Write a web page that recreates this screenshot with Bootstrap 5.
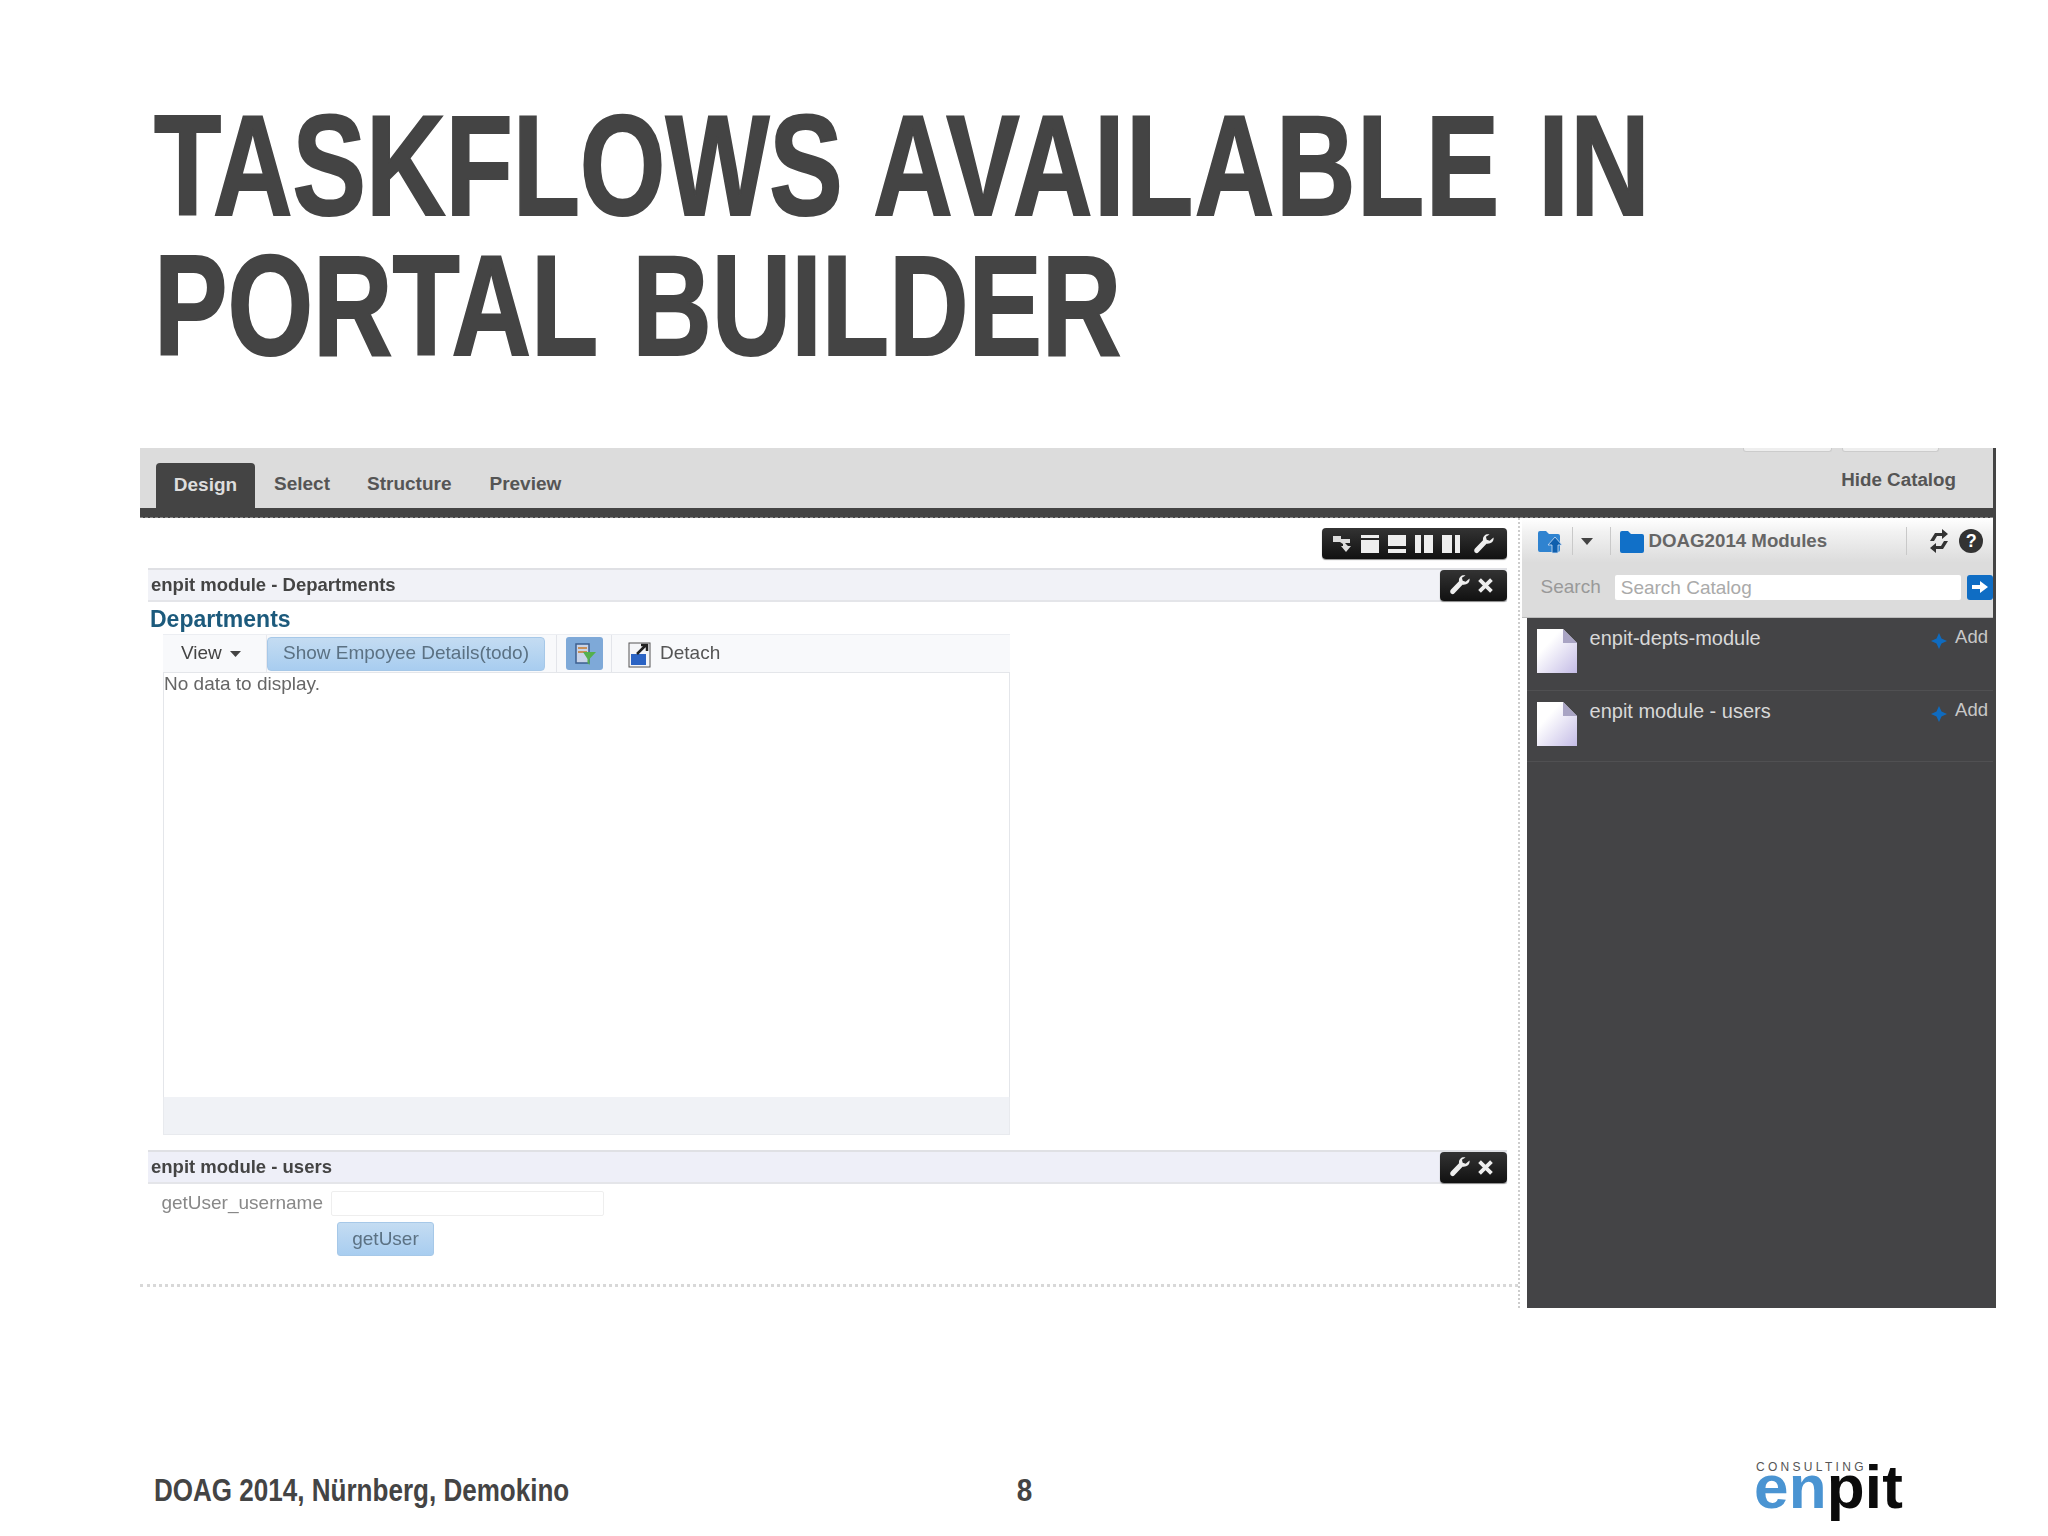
<!DOCTYPE html>
<html lang="en">
<head>
<meta charset="utf-8">
<title>Taskflows</title>
<link href="https://cdn.jsdelivr.net/npm/bootstrap@5.3.0/dist/css/bootstrap.min.css" rel="stylesheet">
<style>
html,body{margin:0;background:#fff}
.slide{width:2048px;height:1536px;overflow:hidden;font-family:"Liberation Sans",Arial,sans-serif;position:relative}
.ttl{margin:0;padding:96px 0 0 154px;height:448px;font-family:"Liberation Sans",sans-serif;font-weight:700;font-size:142px;line-height:140px;color:#444;white-space:nowrap}
.ttl>span{display:inline-block;transform:scaleX(.775);transform-origin:0 50%;-webkit-text-stroke:2px #444}
.tw1{letter-spacing:2px;word-spacing:7px}
.tw2{word-spacing:7px}
.shot{margin-left:140px;width:1856px;height:860px;filter:blur(.7px);border-right:3px solid #444;color:#444;font-size:18px}
.topbar{height:60px;background:#dcdcdc;padding-left:16px;position:relative}
.tabon{width:99px;height:45px;background:#444;color:#ddd;border-radius:4px 4px 0 0;font-weight:700;font-size:19px}
.tabx{font-weight:700;font-size:19px;color:#555;margin-bottom:10px}
.tx1{margin-left:19px}.tx2{margin-left:37px}.tx3{margin-left:38px}
.hidec{margin-left:auto;margin-right:37px;margin-bottom:14px;font-weight:700;font-size:18.800px;color:#555}
.stub{position:absolute;top:0;height:4px;background:#eee;border:1px solid #ccc;border-top:0;border-radius:0 0 3px 3px}
.stub1{left:1603px;width:89px}.stub2{left:1702px;width:97px}
.darkbar{height:10px;background:#444;border-bottom:1px dashed #888}
.lmain{width:1384px;height:790px;border-right:2px dotted #ccc;padding:10px 0 0 8px;position:relative}
.tbar1{margin-right:11px}
.blk{height:31px;background:linear-gradient(#333,#111);border-radius:4px;box-shadow:0 1px 1px #888;padding:0 13px 0 10px}
.blk1{width:185px;gap:9px}.blk2{width:67px}
.wrl{margin-left:5px}
.mhd{height:34px;background:#f1f2f7;border-top:2px solid #dfe0e4;border-bottom:2px solid #e4e5e9;margin:9px 11px 0 0;font-weight:700;font-size:18.500px;color:#444;padding-left:3px}
.mhd2{margin-top:15px;background:#eeeff8}
.depts{height:32px;color:#1c5a7c;font-weight:700;font-size:23px;line-height:35px;padding-left:2px}
.tabbox{width:847px;margin-left:15px}
.tbx{height:38px;background:#f8f9fb;border-top:1px solid #eceef2;font-size:19px;color:#555}
.vw{width:104px;padding-left:18px;border-right:1px solid #e8e9ee;height:100%;color:#444}
.blubtn{background:linear-gradient(#c4dcf2,#a8cdf0);border:1px solid #a6c8e8;border-radius:4px;color:#5b7183;width:278px;height:34px;font-size:19px}
.sep1{width:1px;height:100%;background:#e3e5ea;margin:0 9px 0 11px}
.ibtn{width:37px;height:33px;background:#7ea9d8;border-radius:3px}
.sep2{width:1px;height:100%;background:#e3e5ea;margin:0 8px}
.grd{height:425px;border:1px solid #e4e6ea;border-bottom:0;font-size:19px;color:#666;line-height:22px;background:#fff}
.gft{height:38px;background:#f0f2f6;border:1px solid #e8eaee;border-top:0}
.frm{margin-top:7px;color:#888;font-size:19px;height:25px}
.lbl{width:175px;text-align:right;white-space:nowrap}
.fld{width:273px;height:25px;border:1px solid #eee;border-radius:2px;margin-left:8px;background:#fff}
.gbtn{margin:6px 0 0 189px;width:97px;height:34px;background:linear-gradient(#c4dcf2,#a8cdf0);border:1px solid #a6c8e8;border-radius:3px;color:#5b7183;font-size:19px}
.dots{position:absolute;left:0;right:0;top:766px;border-top:3px dotted #d8d8d8}
.rpane{width:468px;margin-left:7px}
.rhead{height:100px;background:linear-gradient(#fff 0,#f2f2f2 14%,#dcdcdc 45%,#dcdcdc);border-bottom:1px solid #bbb;margin-left:-5px}
.rtool{height:46px;padding:0 0 0 16px;position:relative;font-size:18.700px;font-weight:700;color:#666}
.vsep{width:1px;height:28px;background:#c9c9c9}
.vs1{margin-left:17px}.vs2{margin-left:79px}
.syn{margin-left:22px}
.hlp{width:24px;height:24px;margin-left:10px;background:#333;font-size:18px;line-height:1}
.rsrch{height:46px;padding-left:19px;color:#999;font-size:19px}
.srin{width:346px;height:25px;background:#fff;margin-left:14px;padding-left:6px;line-height:25px;color:#aaa;border-radius:2px}
.gobtn{width:26px;height:25px;margin-left:6px;background:#0f6dc4;border-radius:3px}
.rdark{background:#444446;height:690px;color:#d8d8d8;font-size:20px}
.citem{height:73px;border-bottom:1px solid #505052;padding:11px 5px 0 10px}
.citem:nth-child(2){height:71px}
.cnm{margin-left:13px;line-height:18px}
.cadd{margin-left:auto;color:#c8c8c8;line-height:16px;font-size:18.500px}
.ftr{position:absolute;left:154px;right:0;top:1472px;font-family:"Liberation Sans",sans-serif;font-weight:700;font-size:31px;line-height:38px;color:#444;white-space:nowrap}
.ftx{display:inline-block;transform:scaleX(.84);transform-origin:0 50%}
.pg{position:absolute;left:862px;top:0;width:14px;text-align:center;transform:scaleX(.9)}
.lgo{position:absolute;left:1755px;top:1460px;width:160px;height:64px}
.lcs{position:absolute;left:1px;top:2px;font-size:12px;letter-spacing:3.300px;line-height:11px;color:#555;font-family:"Liberation Sans",sans-serif;white-space:nowrap}
.lnm{position:absolute;left:-1px;top:11.500px;font-family:"Liberation Sans",sans-serif;font-weight:700;font-size:62px;line-height:30px;letter-spacing:.2px;color:#0b0b0b}
.lnm b{color:#4a94d2;font-weight:700}
svg{display:block;flex:none}
</style>
</head>
<body>
<svg width="0" height="0" class="position-absolute">
<defs>
<linearGradient id="pg" x1="0" y1="0" x2="1" y2="1"><stop offset="0.3" stop-color="#fff"/><stop offset="1" stop-color="#c4bce6"/></linearGradient>
<symbol id="wr" viewBox="0 0 20 20"><path d="M19.500 3.500l-3.800 3.300-3-1-.8-3L15.500.500C12-.6 8.500 2 9 6.200L1 14.600c-1.600 1.600-.5 3.500.5 4.200 1 .6 2 .4 2.700-.3l8.300-8.800c4.500.7 7.800-2.500 7-6.200z" fill="#eee"/></symbol>
<symbol id="cl" viewBox="0 0 20 20"><path d="M3 3l14 14M17 3L3 17" stroke="#eee" stroke-width="4.500"/></symbol>
<symbol id="fo" viewBox="0 0 26 26"><path d="M1 5a2 2 0 0 1 2-2h6l3 3h11a2 2 0 0 1 2 2v15a2 2 0 0 1-2 2H3a2 2 0 0 1-2-2z" fill="#1170c8"/></symbol>
<symbol id="dc" viewBox="0 0 40 44"><path d="M0 0h26l14 14v30H0z" fill="url(#pg)"/><path d="M26 0l14 14H26z" fill="#a9a4c4"/></symbol>
<symbol id="pl" viewBox="0 0 16 16"><path d="M8 0l2.500 5.500L16 8l-5.500 2.500L8 16l-2.500-5.500L0 8l5.500-2.500z" fill="#0f6bbf"/></symbol>
</defs>
</svg>
<div class="slide">
<h1 class="ttl"><span>TASKFLOWS <span class="tw1">AVAILABLE IN</span><br><span class="tw2">PORTAL BUILDER</span></span></h1>
<div class="shot d-flex flex-column">
  <div class="topbar d-flex align-items-end">
    <span class="stub stub1"></span><span class="stub stub2"></span>
    <div class="tabon d-flex align-items-center justify-content-center">Design</div>
    <div class="tabx tx1">Select</div>
    <div class="tabx tx2">Structure</div>
    <div class="tabx tx3">Preview</div>
    <div class="hidec">Hide Catalog</div>
  </div>
  <div class="darkbar"></div>
  <div class="d-flex flex-grow-1">
    <div class="lmain">
      <div class="tbar1 d-flex justify-content-end">
        <div class="blk blk1 d-flex align-items-center">
          <svg width="20" height="18" viewBox="0 0 20 18"><path d="M1 1h8v3h9v4h-5l3 3h3l-5 6-5-6h2V9L8 7H1z" fill="#ddd"/></svg>
          <svg width="18" height="18" viewBox="0 0 18 18"><path d="M0 0h18v3H0zM0 5h18v13H0z" fill="#eee"/></svg>
          <svg width="18" height="18" viewBox="0 0 18 18"><path d="M0 0h18v11H0zM0 14h18v4H0z" fill="#eee"/></svg>
          <svg width="18" height="18" viewBox="0 0 18 18"><path d="M0 0h6v18H0zM9 0h9v18H9z" fill="#eee"/></svg>
          <svg width="18" height="18" viewBox="0 0 18 18"><path d="M0 0h10v18H0zM13 0h5v18h-5z" fill="#eee"/></svg>
          <svg width="20" height="20" class="wrl"><use href="#wr"/></svg>
        </div>
      </div>
      <div class="mhd d-flex align-items-center justify-content-between">
        <span>enpit module - Departments</span>
        <div class="blk blk2 d-flex align-items-center justify-content-between"><svg width="20" height="20"><use href="#wr"/></svg><svg width="17" height="17"><use href="#cl"/></svg></div>
      </div>
      <div class="depts">Departments</div>
      <div class="tabbox">
        <div class="tbx d-flex align-items-center">
          <div class="vw d-flex align-items-center gap-1">View <svg width="11" height="6" viewBox="0 0 11 6" class="ms-1"><path d="M0 0h11L5.500 6z" fill="#444"/></svg></div>
          <div class="blubtn d-flex align-items-center justify-content-center">Show Empoyee Details(todo)</div>
          <div class="sep1"></div>
          <div class="ibtn d-flex align-items-center justify-content-center">
            <svg width="24" height="24" viewBox="0 0 24 24"><rect x="3" y="2" width="13" height="19" fill="#c9d4e8" stroke="#3c5f8f" stroke-width="1.500"/><path d="M5 6h9M5 10h9" stroke="#c87a2a" stroke-width="1.500"/><path d="M10 10h13l-6.500 7v6l-2-2v-4z" fill="#54b04c"/></svg>
          </div>
          <div class="sep2"></div>
          <svg width="24" height="28" viewBox="0 0 24 28" class="ms-2"><rect x="1" y="3" width="21" height="24" fill="#f4f5f8" stroke="#555"/><rect x="3" y="14" width="15" height="11" fill="#2a63c4"/><path d="M9 14l9-9m-5 0h6v6" stroke="#222" stroke-width="2.500" fill="none"/></svg>
          <span class="ms-2">Detach</span>
        </div>
        <div class="grd">No data to display.</div>
        <div class="gft"></div>
      </div>
      <div class="mhd mhd2 d-flex align-items-center justify-content-between">
        <span>enpit module - users</span>
        <div class="blk blk2 d-flex align-items-center justify-content-between"><svg width="20" height="20"><use href="#wr"/></svg><svg width="17" height="17"><use href="#cl"/></svg></div>
      </div>
      <div class="frm d-flex align-items-center"><div class="lbl">getUser_username</div><div class="fld"></div></div>
      <div class="gbtn d-flex align-items-center justify-content-center">getUser</div>
      <div class="dots"></div>
    </div>
    <div class="rpane">
      <div class="rhead">
        <div class="rtool d-flex align-items-center">
          <svg width="26" height="26" viewBox="0 0 26 26"><path d="M0 5a2 2 0 0 1 2-2h6l3 3h9a2 2 0 0 1 2 2v14a2 2 0 0 1-2 2H2a2 2 0 0 1-2-2z" fill="#2f83d0"/><path d="M17 9l7 8h-4v8h-6v-8h-4z" fill="#0f5fae" stroke="#cfe0f2" stroke-width=".8"/></svg>
          <div class="vsep ms-2"></div>
          <svg width="12" height="7" viewBox="0 0 12 7" class="ms-2"><path d="M0 0h12L6 7z" fill="#444"/></svg>
          <div class="vsep vs1"></div>
          <svg width="26" height="26" class="ms-2"><use href="#fo"/></svg>
          <span class="ms-1">DOAG2014 Modules</span>
          <div class="vsep vs2"></div>
          <svg width="20" height="26" viewBox="0 0 20 26" class="syn"><path d="M13 1l6 5-6 5V8H8l-3 5H1l5-8h7zM7 25l-6-5 6-5v3h5l3-5h4l-5 8H7z" fill="#333"/></svg>
          <div class="hlp d-flex align-items-center justify-content-center rounded-circle text-white fw-bold">?</div>
        </div>
        <div class="rsrch d-flex align-items-center">
          <span>Search</span>
          <div class="srin">Search Catalog</div>
          <div class="gobtn d-flex align-items-center justify-content-center"><svg width="16" height="12" viewBox="0 0 16 12"><path d="M0 4h8V0l8 6-8 6V8H0z" fill="#fff"/></svg></div>
        </div>
      </div>
      <div class="rdark">
        <div class="citem d-flex"><svg width="40" height="44"><use href="#dc"/></svg><div class="cnm">enpit-depts-module</div><div class="cadd d-flex gap-2"><svg width="16" height="16" class="mt-1"><use href="#pl"/></svg>Add</div></div>
        <div class="citem d-flex"><svg width="40" height="44"><use href="#dc"/></svg><div class="cnm">enpit module - users</div><div class="cadd d-flex gap-2"><svg width="16" height="16" class="mt-1"><use href="#pl"/></svg>Add</div></div>
      </div>
    </div>
  </div>
</div>
<div class="ftr"><span class="ftx">DOAG 2014, Nürnberg, Demokino</span><div class="pg">8</div></div>
<div class="lgo"><div class="lnm"><b>en</b>pit</div><div class="lcs">CONSULTING</div></div>
</div>
</body>
</html>
